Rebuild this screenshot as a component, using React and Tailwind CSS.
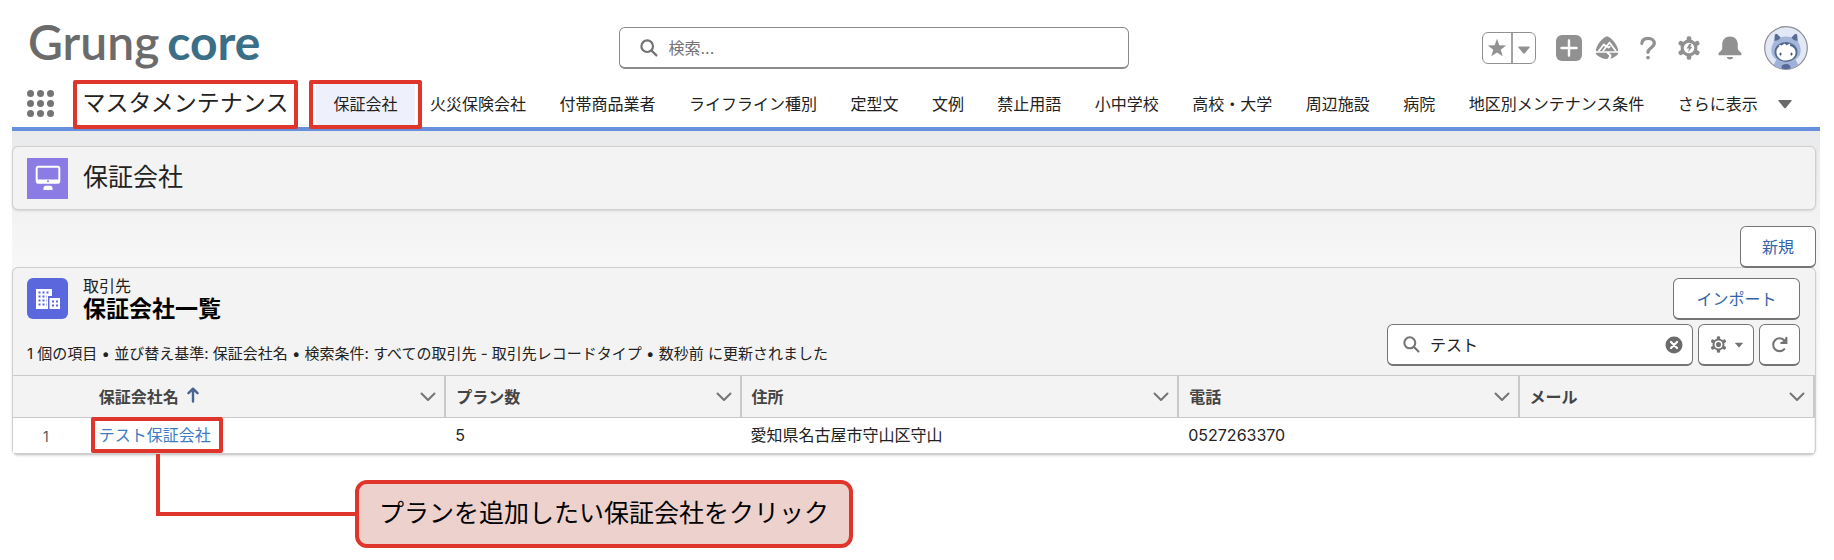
import React from 'react';

const TABS = ['火災保険会社', '付帯商品業者', 'ライフライン種別', '定型文', '文例', '禁止用語', '小中学校', '高校・大学', '周辺施設', '病院', '地区別メンテナンス条件'];

const COLUMNS = [
  { label: '保証会社名', width: 'w-[19.8%]', sorted: true },
  { label: 'プラン数', width: 'w-[16.4%]' },
  { label: '住所', width: 'w-[24.3%]' },
  { label: '電話', width: 'w-[18.9%]' },
  { label: 'メール', width: 'w-[16.4%]' },
];

const ROWS = [
  { name: 'テスト保証会社', plans: '5', address: '愛知県名古屋市守山区守山', phone: '0527263370', mail: '' },
];

const TEETH = [0, 60, 120, 180, 240, 300];

const SearchIcon = ({ className }) => (
  <svg viewBox="0 0 18 18" className={className} fill="none" stroke="#747474" strokeWidth="2.2" strokeLinecap="round">
    <circle cx="7.2" cy="7.2" r="5.8" />
    <path d="M11.6 11.6 16.4 16.4" />
  </svg>
);

const Caret = ({ className }) => (
  <svg viewBox="0 0 12 8" className={className} fill="currentColor">
    <path d="M.8.6h10.4c.5 0 .7.5.4.9L6.6 7.4a.8.8 0 0 1-1.2 0L.4 1.5C.1 1.1.3.6.8.6z" />
  </svg>
);

const GearBody = ({ children }) => (
  <>
    <circle cx="12" cy="12" r="8.4" fill="currentColor" />
    {TEETH.map(deg => (
      <rect key={deg} x="9.7" y="0.3" width="4.6" height="6" rx="1.8" fill="currentColor" transform={`rotate(${deg} 12 12)`} />
    ))}
    {children}
  </>
);

const TrailheadIcon = () => (
  <svg viewBox="0 0 24 24" className="w-6 h-6">
    <path fill="currentColor" d="M12 .5c1.2 0 2.3.7 3.4 1.6 3.7 3 6.6 7.1 7.7 11.7.2.8-.3 1.4-1 1.4H1.9c-.8 0-1.2-.6-1-1.4C2 9.2 4.9 5.1 8.6 2.1 9.7 1.2 10.8.5 12 .5z" />
    <path fill="none" stroke="#fff" strokeWidth="1.7" strokeLinejoin="round" d="M3.5 15.3 9 8.3l2.7 3.3M7.8 15.3l6.7-8.8 6.5 8.8M11.8 10l2 1.5 1.5-1.5" />
    <path fill="currentColor" d="M1.3 16.8h10.5c-.4 1.1 1.5 1.6 2.2 2.5.6.9-.7 2.3-1.7 3.7C7.7 23 3.3 20.9 1 18c-.4-.6-.2-1.2.3-1.2zM14.1 16.8h8.6c.5 0 .7.6.3 1.2-1.7 2.2-4.3 3.9-7.6 4.6.6-1.5 1.5-2.8.7-4-.6-.8-1.8-1-2-1.8z" />
  </svg>
);

const Avatar = () => (
  <svg viewBox="0 0 44 44" className="w-11 h-11">
    <clipPath id="face"><circle cx="22" cy="22" r="21" /></clipPath>
    <circle cx="22" cy="22" r="21.3" fill="#e3e8f6" stroke="#8e9096" strokeWidth="1.2" />
    <g clipPath="url(#face)">
      <path fill="#9fb1d8" d="M13 32h18l6 13H7z" />
      <path fill="#a5b6db" d="M10.5 9.5c.3-1.7 2-2.2 3.2-1l3.1 2.8c3.3-1 7.2-1 10.5 0L30.4 8.5c1.2-1.2 2.9-.7 3.2 1l.8 7c1.5 2.4 2.3 5.2 2.3 8 0 7.3-6.5 11.5-14.7 11.5S7.3 31.8 7.3 24.5c0-2.8.8-5.6 2.3-8z" />
      <path fill="#596b91" d="M11 9.3c.3-1.3 1.5-1.7 2.4-.8l2.9 3c-.5 2-2.9 3.5-5.7 3.3zM33 9.3c-.3-1.3-1.5-1.7-2.4-.8l-2.9 3c.5 2 2.9 3.5 5.7 3.3z" />
      <ellipse cx="22" cy="26" rx="11.5" ry="10" fill="#52688f" />
      <path fill="#fff" d="M12.4 26c0-2.3 1-4.3 2.6-5.3l.4-2 2.3.7 3-1.8 1.6 1.7 4.2-1.7-.7 2.3c3.5.6 5.8 3 5.8 6.4 0 5-4.3 8.2-9.6 8.2s-9.6-3.4-9.6-8.5z" />
      <ellipse cx="16.5" cy="28" rx="1" ry="1.5" fill="#3e4f70" />
      <ellipse cx="27.5" cy="28" rx="1" ry="1.5" fill="#3e4f70" />
      <ellipse cx="22" cy="41.5" rx="4.5" ry="3.5" fill="#566a96" />
    </g>
  </svg>
);

const HeaderActions = () => (
  <div className="ml-auto mr-3 flex items-center text-[#919191]">
    <div className="mr-5 flex h-8 w-[54px] rounded-md border border-[#919191]">
      <button aria-label="お気に入り" className="flex flex-1 items-center justify-center border-r-2 border-[#a3a3a3]">
        <svg viewBox="0 0 20 20" className="h-5 w-5" fill="currentColor">
          <path d="M10 .8 12.3 7.3 19.2 7.5 13.7 11.7 15.7 18.3 10 14.4 4.3 18.3 6.3 11.7.8 7.5 7.7 7.3z" />
        </svg>
      </button>
      <button aria-label="お気に入りリスト" className="flex w-[22px] items-center justify-center">
        <Caret className="mt-1 h-2 w-3" />
      </button>
    </div>
    <div className="mr-[22px] flex items-center gap-[17px]">
      <button aria-label="グローバルアクション" className="-mr-1 flex h-[26px] w-[26px] items-center justify-center rounded-md bg-[#919191]">
        <svg viewBox="0 0 18 18" className="h-[18px] w-[18px]" stroke="#fff" strokeWidth="2.4" strokeLinecap="round">
          <path d="M9 1.5v15M1.5 9h15" />
        </svg>
      </button>
      <button aria-label="Trailhead"><TrailheadIcon /></button>
      <button aria-label="ヘルプ">
        <svg viewBox="0 0 24 24" className="h-6 w-6" fill="none" stroke="currentColor" strokeWidth="3.2" strokeLinecap="round">
          <path d="M5.8 7.4C6 4.2 8.4 2.3 12 2.3s6.3 2 6.3 5c0 4.3-6.3 4.6-6.3 9" />
          <rect x="11.3" y="21" width="1.4" height="1.2" strokeWidth="2" strokeLinejoin="round" />
        </svg>
      </button>
      <button aria-label="設定">
        <svg viewBox="0 0 24 24" className="h-6 w-6">
          <GearBody>
            <circle cx="12" cy="12" r="5.3" fill="#fff" />
            <path fill="currentColor" d="M12.3 7.8h2.2l-1.2 3h2.1l-4.3 5.5.9-3.8H9.6z" />
          </GearBody>
        </svg>
      </button>
      <button aria-label="通知">
        <svg viewBox="0 0 24 24" className="h-6 w-6" fill="currentColor">
          <path d="M12 .6c4.6 0 7.8 3.3 7.8 7.8v4.2c0 2.4 3.8 3.6 3.8 5.7 0 .7-.5 1-1.2 1H1.6c-.7 0-1.2-.3-1.2-1 0-2.1 3.8-3.3 3.8-5.7V8.4C4.2 3.9 7.4.6 12 .6zM9.3 21h5.4c.4 0 .5.4.3.7-.6 1-1.7 1.7-3 1.7s-2.4-.7-3-1.7c-.2-.3-.1-.7.3-.7z" />
        </svg>
      </button>
    </div>
    <button aria-label="プロフィール"><Avatar /></button>
  </div>
);

const ColumnHeader = ({ label, width, sorted }) => (
  <th scope="col" className={`${width} border-r-2 border-[#c9c9c9] pr-2 pl-[10px] text-left font-bold text-[#444]`}>
    <div className="flex items-center">
      <span>{label}</span>
      {sorted && (
        <svg viewBox="0 0 12 16" className="mb-1 ml-2 h-4 w-3" fill="none" stroke="#4a648f" strokeWidth="2.4" strokeLinecap="round" strokeLinejoin="round">
          <path d="M6 14.5V2M1.5 6.2 6 1.7l4.5 4.5" />
        </svg>
      )}
      <svg viewBox="0 0 16 10" className="ml-auto h-[10px] w-4" fill="none" stroke="#747474" strokeWidth="2" strokeLinecap="round" strokeLinejoin="round">
        <path d="M1.5 1.5 8 8l6.5-6.5" />
      </svg>
    </div>
  </th>
);

export default function App() {
  return (
    <div className="bg-white pl-3 pr-[14px] text-base text-[#222] font-[Inter,'Noto_Sans_CJK_JP',sans-serif]">
      {/* Global header */}
      <header className="flex h-20 items-center pt-4">
        <a href="#" className="flex w-[33.6%] items-baseline gap-2 pb-3 pl-4 font-[Lato,sans-serif] text-5xl font-semibold text-[#6b6b6b]">
          Grung <span className="font-bold text-[#3b6e87]">core</span>
        </a>
        <label className="flex h-[42px] w-[28.2%] items-center rounded-md border border-b-2 border-[#8a8a8a] px-5">
          <SearchIcon className="h-[18px] w-[18px] shrink-0" />
          <input type="search" aria-label="検索" placeholder="検索..." className="ml-[10px] min-w-0 flex-1 outline-none placeholder:text-[#747474]" />
        </label>
        <HeaderActions />
      </header>

      {/* App navigation */}
      <nav className="flex h-[51px] items-stretch border-b-4 border-[#6790dc] whitespace-nowrap">
        <button aria-label="アプリケーションランチャー" className="flex w-[61px] items-center pl-[15px]">
          <span className="grid grid-cols-3 gap-[3px]">
            {Array.from({ length: 9 }, (_, i) => <span key={i} className="h-[7px] w-[7px] rounded-full bg-[#747474]" />)}
          </span>
        </button>
        <div className="relative flex w-[225px] items-center justify-center text-[23px]">
          <span>マスタメンテナンス</span>
          <span className="pointer-events-none absolute inset-x-0 top-0 -bottom-[2px] z-10 rounded-xs border-4 border-[#e0352a]" />
        </div>
        <div className="ml-[11px] flex flex-1 items-stretch justify-between pr-7">
          <a href="#" className="relative flex w-[113px] items-center justify-center px-[7px]">
            <span className="flex h-full w-full items-center justify-center bg-[#eef1fc]">保証会社</span>
            <span className="pointer-events-none absolute inset-x-0 top-0 -bottom-[2px] z-10 rounded-xs border-4 border-[#e0352a]" />
          </a>
          <div className="ml-2 flex flex-1 items-center justify-between">
            {TABS.map(tab => <a key={tab} href="#">{tab}</a>)}
            <button className="flex items-center gap-5">
              さらに表示 <Caret className="h-[10px] w-[14px] text-[#6b6b6b]" />
            </button>
          </div>
        </div>
      </nav>

      <main className="bg-linear-to-b from-[#e9eaeb] via-[#f7f7f7] via-40% to-white pt-[15px] pr-1">
        <section className="flex h-16 items-center gap-[15px] rounded-md border border-[#d0d0d0] bg-[#f3f3f3] pl-[14px] shadow-sm">
          <span className="flex h-[41px] w-[41px] items-center justify-center bg-[#8a7ce4]">
            <svg viewBox="0 0 26 26" className="h-[26px] w-[26px]">
              <rect x="1.7" y="1.7" width="22.6" height="16" rx="1.8" fill="none" stroke="#fff" strokeWidth="2" />
              <path fill="#fff" d="M2 14.5h22v3H2zM10.3 20.8h5.4c1 0 2 1.8 2 3.2 0 .6-.3.9-.8.9H9.1c-.5 0-.8-.3-.8-.9 0-1.4 1-3.2 2-3.2z" />
              <circle cx="13" cy="16.2" r="1" fill="#8a7ce4" />
            </svg>
          </span>
          <h1 className="text-[25px]">保証会社</h1>
        </section>

        <div className="flex justify-end pt-4">
          <button className="z-10 h-[42px] w-[76px] rounded-md border border-b-2 border-[#747474] bg-white text-[#3463a8]">新規</button>
        </div>

        <section className="-mt-px rounded-md border border-[#cfcfcf] border-b-2 bg-[#f3f3f3] shadow-sm">
          <div className="flex h-[107px] justify-between pt-[10px] pr-[15px] pl-[14px]">
            <div>
              <div className="flex gap-[15px]">
                <span className="flex h-[41px] w-[41px] items-center justify-center rounded-md bg-[#5a67dd]">
                  <svg viewBox="0 0 26 22" className="h-[22px] w-[26px]">
                    <path fill="#fff" d="M1 1h16v7h-4v13H1zM14.5 10H25v11H14.5z" />
                    <path stroke="#5a67dd" strokeWidth="2" strokeDasharray="2 2" d="M3.5 4.5H15M3.5 8.5H12M3.5 12.5H12M3.5 16.5H12M17 13.5h7M17 17.5h7" />
                  </svg>
                </span>
                <div>
                  <p className="leading-4">取引先</p>
                  <h2 className="text-[23px] leading-[30px] font-bold text-black">保証会社一覧</h2>
                </div>
              </div>
              <p className="mt-5 text-[15px] leading-5">1 個の項目 • 並び替え基準: 保証会社名 • 検索条件: すべての取引先 - 取引先レコードタイプ • 数秒前 に更新されました</p>
            </div>
            <div className="flex flex-col items-end gap-1">
              <button className="h-[42px] w-[127px] rounded-md border border-b-2 border-[#747474] bg-white text-[#3463a8]">インポート</button>
              <div className="flex gap-[5px]">
                <div className="flex h-[42px] w-[306px] items-center rounded-md border border-b-2 border-[#747474] bg-white pr-[9px] pl-[15px]">
                  <SearchIcon className="h-[17px] w-[17px] shrink-0" />
                  <input type="text" aria-label="リストを検索" defaultValue="テスト" className="ml-[10px] min-w-0 flex-1 outline-none" />
                  <button aria-label="クリア">
                    <svg viewBox="0 0 18 18" className="h-[18px] w-[18px]">
                      <circle cx="9" cy="9" r="8.5" fill="#6b6b6b" />
                      <path d="M6 6l6 6M12 6l-6 6" stroke="#fff" strokeWidth="2.2" strokeLinecap="round" />
                    </svg>
                  </button>
                </div>
                <button aria-label="リストビューコントロール" className="flex h-[42px] w-[56px] items-center justify-center gap-2 rounded-md border border-b-2 border-[#747474] bg-white text-[#747474]">
                  <svg viewBox="0 0 24 24" className="h-[17px] w-[17px]">
                    <GearBody>
                      <circle cx="12" cy="12" r="4.6" fill="none" stroke="#fff" strokeWidth="2" />
                    </GearBody>
                  </svg>
                  <Caret className="h-[6px] w-2" />
                </button>
                <button aria-label="更新" className="flex h-[42px] w-[41px] items-center justify-center rounded-md border border-b-2 border-[#747474] bg-white">
                  <svg viewBox="0 0 18 18" className="h-[17px] w-[17px]" fill="none" stroke="#747474" strokeWidth="2.2" strokeLinecap="round">
                    <path d="M14 14a6.8 6.8 0 1 1 .2-9.3M16.3 1.8v5.7h-5.5" />
                    <path d="M15.8 3v4h-4z" fill="#747474" strokeWidth="1" />
                  </svg>
                </button>
              </div>
            </div>
          </div>

          <table className="w-full table-fixed border-collapse">
            <thead>
              <tr className="h-[42px] border-y border-[#c9c9c9]">
                <th className="w-[4.2%]" aria-label="行番号" />
                {COLUMNS.map(col => <ColumnHeader key={col.label} {...col} />)}
              </tr>
            </thead>
            <tbody>
              {ROWS.map((row, i) => (
                <tr key={row.name} className="h-[35px] bg-white">
                  <td className="pl-[30px] pt-1 text-sm text-[#555]">{i + 1}</td>
                  <td className="px-[10px]">
                    <a href="#" className="relative text-[#3f7cc4]">
                      {row.name}
                      <span className="pointer-events-none absolute -inset-x-2 -inset-y-2 -right-3 rounded-xs border-4 border-[#e0352a]" />
                    </a>
                  </td>
                  <td className="px-[10px]">{row.plans}</td>
                  <td className="px-[10px]">{row.address}</td>
                  <td className="px-[10px]">{row.phone}</td>
                  <td className="px-[10px]">{row.mail}</td>
                </tr>
              ))}
            </tbody>
          </table>
        </section>
      </main>

      {/* Guide callout with elbow line up to the company link */}
      <div className="relative mt-[25px] ml-[343px] flex h-[68px] w-fit items-center rounded-xl border-4 border-[#e0352a] bg-[#edd1cd] px-5 text-[25px] text-black">
        プランを追加したい保証会社をクリック
        <span className="absolute right-full bottom-7 mr-1 h-[62px] w-[199px] border-b-4 border-l-4 border-[#e0352a]" />
      </div>
    </div>
  );
}
